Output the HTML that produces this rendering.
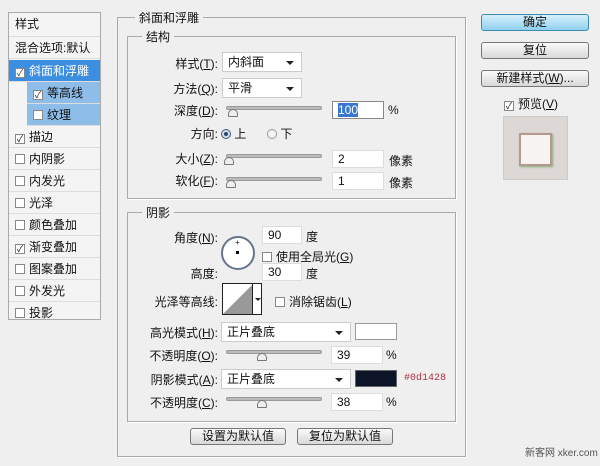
<!DOCTYPE html>
<html><head><meta charset="utf-8"><style>
*{box-sizing:border-box;margin:0;padding:0}
body{width:600px;height:466px;background:#efefef;font-family:"Liberation Sans","Noto Sans CJK SC",sans-serif;font-size:12px;color:#111;position:relative;overflow:hidden}
.a{position:absolute;white-space:nowrap}
.lp{position:absolute;left:8px;top:12px;width:93px;height:308px;border:1px solid #aaa;background:#f4f4f4}
.row{position:absolute;left:0;width:91px;height:22px;line-height:22px;padding-left:6px;border-bottom:1px solid #ddd}
.cb{display:inline-block;width:10px;height:10px;border:1px solid #888;background:#fff;vertical-align:-1px;margin-right:4px;font-size:9px;line-height:8px;text-align:center}
.box{position:absolute;border:1px solid #aaa;box-shadow:1px 1px 0 #fff}
.lbl{position:absolute;text-align:right;white-space:nowrap}
.sel{position:absolute;height:20px;background:#fff;border:1px solid #ccc;padding-left:5px;line-height:18px}
.sel:after{content:"";position:absolute;right:7px;top:8px;border:4px solid transparent;border-top:4px solid #222}
.sl{position:absolute;height:4px;background:#bbb;border:1px solid #999;border-radius:2px}
.th{position:absolute;top:2px;width:10px;height:8px;background:#eee;border:1px solid #777;border-radius:5px 5px 1px 1px}
.in{position:absolute;height:18px;background:#fff;border:1px solid #ddd;padding-left:5px;line-height:16px}
.btn{position:absolute;height:17px;border:1px solid #777;border-radius:3px;background:linear-gradient(#fafafa,#d8d8d8);text-align:center;line-height:15px}
</style></head><body>
<div class="lp">
<div class="row" style="top:0;height:24px">样式</div>
<div class="row" style="top:24px">混合选项:默认</div>
<div class="row" style="top:47px;background:#3c8fe0;color:#fff"><span class="cb" style="color:#333">✓</span>斜面和浮雕</div>
<div class="row" style="top:69px;left:18px;width:73px;background:#8ebdea"><span class="cb">✓</span>等高线</div>
<div class="row" style="top:91px;left:18px;width:73px;background:#8ebdea"><span class="cb"></span>纹理</div>
<div class="row" style="top:113px"><span class="cb">✓</span>描边</div>
<div class="row" style="top:135px"><span class="cb"></span>内阴影</div>
<div class="row" style="top:157px"><span class="cb"></span>内发光</div>
<div class="row" style="top:179px"><span class="cb"></span>光泽</div>
<div class="row" style="top:201px"><span class="cb"></span>颜色叠加</div>
<div class="row" style="top:223px"><span class="cb">✓</span>渐变叠加</div>
<div class="row" style="top:245px"><span class="cb"></span>图案叠加</div>
<div class="row" style="top:267px"><span class="cb"></span>外发光</div>
<div class="row" style="top:289px;border:0"><span class="cb"></span>投影</div>
</div>

<div class="box" style="left:117px;top:17px;width:349px;height:440px"></div>
<div class="a" style="left:135px;top:9px;background:#efefef;padding:0 4px">斜面和浮雕</div>
<div class="box" style="left:127px;top:36px;width:329px;height:163px"></div>
<div class="a" style="left:142px;top:28px;background:#efefef;padding:0 4px">结构</div>

<div class="lbl" style="left:140px;width:78px;top:55px">样式(<u>T</u>):</div>
<div class="sel" style="left:222px;top:52px;width:80px">内斜面</div>
<div class="lbl" style="left:140px;width:78px;top:80px">方法(<u>Q</u>):</div>
<div class="sel" style="left:222px;top:78px;width:80px">平滑</div>
<div class="lbl" style="left:140px;width:78px;top:102px">深度(<u>D</u>):</div>
<div class="sl" style="left:226px;top:106px;width:96px"></div><div class="th" style="left:228px;top:109px"></div>
<div class="in" style="left:332px;top:101px;width:52px;border-color:#888"><span style="background:#3876d0;color:#fff">100</span></div>
<div class="a" style="left:388px;top:103px">%</div>
<div class="lbl" style="left:140px;width:78px;top:125px">方向:</div>
<div class="a" style="left:221px;top:125px"><span style="display:inline-block;width:10px;height:10px;border-radius:50%;border:1px solid #557;background:radial-gradient(#246 30%,#cde 40%);vertical-align:-1px"></span> 上</div>
<div class="a" style="left:267px;top:125px"><span style="display:inline-block;width:10px;height:10px;border-radius:50%;border:1px solid #999;background:#f4f4f4;vertical-align:-1px"></span> 下</div>
<div class="lbl" style="left:140px;width:78px;top:150px">大小(<u>Z</u>):</div>
<div class="sl" style="left:226px;top:154px;width:96px"></div><div class="th" style="left:224px;top:157px"></div>
<div class="in" style="left:332px;top:150px;width:52px">2</div>
<div class="a" style="left:389px;top:152px">像素</div>
<div class="lbl" style="left:140px;width:78px;top:172px">软化(<u>F</u>):</div>
<div class="sl" style="left:226px;top:177px;width:96px"></div><div class="th" style="left:226px;top:180px"></div>
<div class="in" style="left:332px;top:172px;width:52px">1</div>
<div class="a" style="left:389px;top:174px">像素</div>

<div class="box" style="left:127px;top:212px;width:329px;height:210px"></div>
<div class="a" style="left:142px;top:204px;background:#efefef;padding:0 4px">阴影</div>
<div class="lbl" style="left:140px;width:78px;top:229px">角度(<u>N</u>):</div>
<div class="a" style="left:221px;top:236px;width:34px;height:34px;border-radius:50%;border:2px solid #67758a;background:#fff"><div style="position:absolute;left:13px;top:13px;width:3px;height:3px;background:#000"></div><div style="position:absolute;left:12px;top:1px;font-size:8px;line-height:8px">+</div></div>
<div class="in" style="left:262px;top:226px;width:40px">90</div>
<div class="a" style="left:306px;top:228px">度</div>
<div class="a" style="left:262px;top:248px"><span class="cb"></span>使用全局光(<u>G</u>)</div>
<div class="lbl" style="left:140px;width:78px;top:265px">高度:</div>
<div class="in" style="left:262px;top:263px;width:40px">30</div>
<div class="a" style="left:306px;top:265px">度</div>
<div class="lbl" style="left:120px;width:98px;top:293px">光泽等高线:</div>
<div class="a" style="left:222px;top:283px;width:40px;height:32px;border:1px solid #222;background:#fff"><svg width="30" height="30" style="position:absolute;left:0;top:0"><polygon points="0,30 30,0 30,30" fill="#999"/></svg><div style="position:absolute;left:29px;top:0;width:1px;height:30px;background:#222"></div><div style="position:absolute;left:32px;top:14px;width:0;border:3px solid transparent;border-top:3px solid #222"></div></div>
<div class="a" style="left:275px;top:293px"><span class="cb"></span>消除锯齿(<u>L</u>)</div>
<div class="lbl" style="left:120px;width:98px;top:324px">高光模式(<u>H</u>):</div>
<div class="sel" style="left:221px;top:322px;width:130px">正片叠底</div>
<div class="a" style="left:355px;top:323px;width:42px;height:17px;background:#fff;border:1px solid #999"></div>
<div class="lbl" style="left:120px;width:98px;top:347px">不透明度(<u>O</u>):</div>
<div class="sl" style="left:226px;top:350px;width:96px"></div><div class="th" style="left:257px;top:353px"></div>
<div class="in" style="left:331px;top:346px;width:52px">39</div>
<div class="a" style="left:386px;top:348px">%</div>
<div class="lbl" style="left:120px;width:98px;top:371px">阴影模式(<u>A</u>):</div>
<div class="sel" style="left:221px;top:369px;width:130px">正片叠底</div>
<div class="a" style="left:355px;top:370px;width:42px;height:17px;background:#0d1428;border:1px solid #666"></div>
<div class="a" style="left:404px;top:373px;font-size:10px;color:#b0304a;font-family:'Liberation Mono',monospace">#0d1428</div>
<div class="lbl" style="left:120px;width:98px;top:394px">不透明度(<u>C</u>):</div>
<div class="sl" style="left:226px;top:397px;width:96px"></div><div class="th" style="left:257px;top:400px"></div>
<div class="in" style="left:331px;top:393px;width:52px">38</div>
<div class="a" style="left:386px;top:395px">%</div>
<div class="btn" style="left:190px;top:428px;width:96px">设置为默认值</div>
<div class="btn" style="left:297px;top:428px;width:96px">复位为默认值</div>

<div class="btn" style="left:481px;top:14px;width:108px;border-color:#3d8bb5;background:linear-gradient(#d8f0fb,#8fd0ee)">确定</div>
<div class="btn" style="left:481px;top:42px;width:108px">复位</div>
<div class="btn" style="left:481px;top:70px;width:108px">新建样式(<u>W</u>)...</div>
<div class="a" style="left:504px;top:95px"><span class="cb">✓</span>预览(<u>V</u>)</div>
<div class="a" style="left:503px;top:116px;width:65px;height:64px;background:#ddd8d6;border:1px solid #ccc"><div style="position:absolute;left:15px;top:16px;width:33px;height:33px;border:2px solid #b49a8e;background:#f7f3f0;box-shadow:1px 1px 2px #8a7"></div></div>
<div class="a" style="left:525px;top:444px;font-size:10px;color:#555">新客网 xker.com</div>
</body></html>
